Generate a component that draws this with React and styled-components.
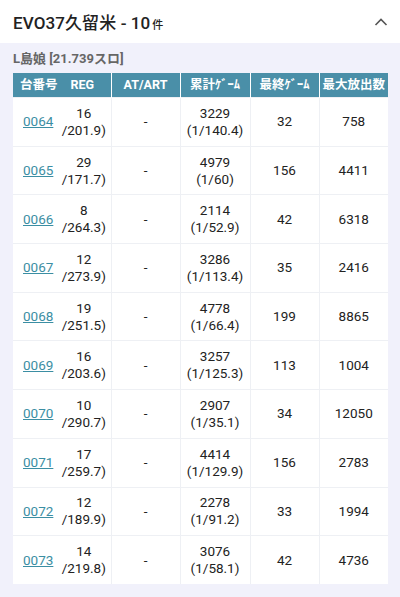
import React from 'react';
import styled, { createGlobalStyle } from 'styled-components';

const GlobalStyle = createGlobalStyle`
  body {
    margin: 0;
    background: #f1f1fb;
    font-family: Roboto, "Noto Sans CJK JP", sans-serif;
    color: #222;
  }
`;

const Header = styled.div`
  height: 43px;
  background: #fff;
  display: flex;
  align-items: center;
  justify-content: space-between;
  padding: 0 12px 0 13px;
`;

const Title = styled.h1`
  margin: 0;
  font-size: 17px;
  font-weight: 500;
  color: #222;
  letter-spacing: 0.1px;
  small {
    font-size: 11px;
    margin-left: 2px;
  }
`;

const Body = styled.div`
  padding: 5px 12px 12px 13px;
`;

const Sub = styled.div`
  font-size: 13px;
  font-weight: 700;
  color: #666;
  margin-bottom: 6px;
`;

const Table = styled.table`
  width: 375px;
  border-collapse: collapse;
  table-layout: fixed;
  background: #fff;
`;

const Th = styled.th`
  background: #4a8fa8;
  color: #fff;
  font-size: 12.5px;
  font-weight: 700;
  height: 24px;
  padding: 0;
  line-height: 16px;
  border-left: 1px solid #fff;
  &:first-child { border-left: none; }
`;

const HeadSplit = styled.div`
  display: flex;
  align-items: center;
  padding-left: 7px;
  gap: 13px;
  span { display: block; line-height: 16px; }
`;

const Td = styled.td`
  height: 47.7px;
  padding: 0;
  text-align: center;
  font-size: 13.5px;
  line-height: 17px;
  border-left: 1px solid #eef0f4;
  border-top: 1px solid #eef0f4;
  &:first-child { border-left: none; }
`;

const FirstCell = styled.div`
  display: flex;
  align-items: center;
  padding-left: 10px;
`;

const Link = styled.a`
  color: #3b8ea3;
  text-decoration: underline;
  width: 38px;
  text-align: left;
`;

const Reg = styled.div`
  flex: 1;
  text-align: center;
  margin-right: 4px;
`;

const rows = [
  ['0064', '16', '201.9', '3229', '140.4', '32', '758'],
  ['0065', '29', '171.7', '4979', '60', '156', '4411'],
  ['0066', '8', '264.3', '2114', '52.9', '42', '6318'],
  ['0067', '12', '273.9', '3286', '113.4', '35', '2416'],
  ['0068', '19', '251.5', '4778', '66.4', '199', '8865'],
  ['0069', '16', '203.6', '3257', '125.3', '113', '1004'],
  ['0070', '10', '290.7', '2907', '35.1', '34', '12050'],
  ['0071', '17', '259.7', '4414', '129.9', '156', '2783'],
  ['0072', '12', '189.9', '2278', '91.2', '33', '1994'],
  ['0073', '14', '219.8', '3076', '58.1', '42', '4736'],
];

export default function App() {
  return (
    <>
      <GlobalStyle />
      <Header>
        <Title>EVO37久留米 - 10<small>件</small></Title>
        <svg width="14" height="10" viewBox="0 0 14 10">
          <path d="M1.5 8 L7 2.5 L12.5 8" fill="none" stroke="#555" strokeWidth="1.6" />
        </svg>
      </Header>
      <Body>
        <Sub>L島娘 [21.739スロ]</Sub>
        <Table>
          <colgroup>
            <col style={{ width: 98 }} />
            <col style={{ width: 69 }} />
            <col style={{ width: 70 }} />
            <col style={{ width: 69 }} />
            <col style={{ width: 69 }} />
          </colgroup>
          <thead>
            <tr>
              <Th><HeadSplit><span>台番号</span><span>REG</span></HeadSplit></Th>
              <Th>AT/ART</Th>
              <Th>累計ｹﾞｰﾑ</Th>
              <Th>最終ｹﾞｰﾑ</Th>
              <Th>最大放出数</Th>
            </tr>
          </thead>
          <tbody>
            {rows.map(r => (
              <tr key={r[0]}>
                <Td>
                  <FirstCell>
                    <Link href="#">{r[0]}</Link>
                    <Reg>{r[1]}<br />/{r[2]})</Reg>
                  </FirstCell>
                </Td>
                <Td>-</Td>
                <Td>{r[3]}<br />(1/{r[4]})</Td>
                <Td>{r[5]}</Td>
                <Td>{r[6]}</Td>
              </tr>
            ))}
          </tbody>
        </Table>
      </Body>
    </>
  );
}
